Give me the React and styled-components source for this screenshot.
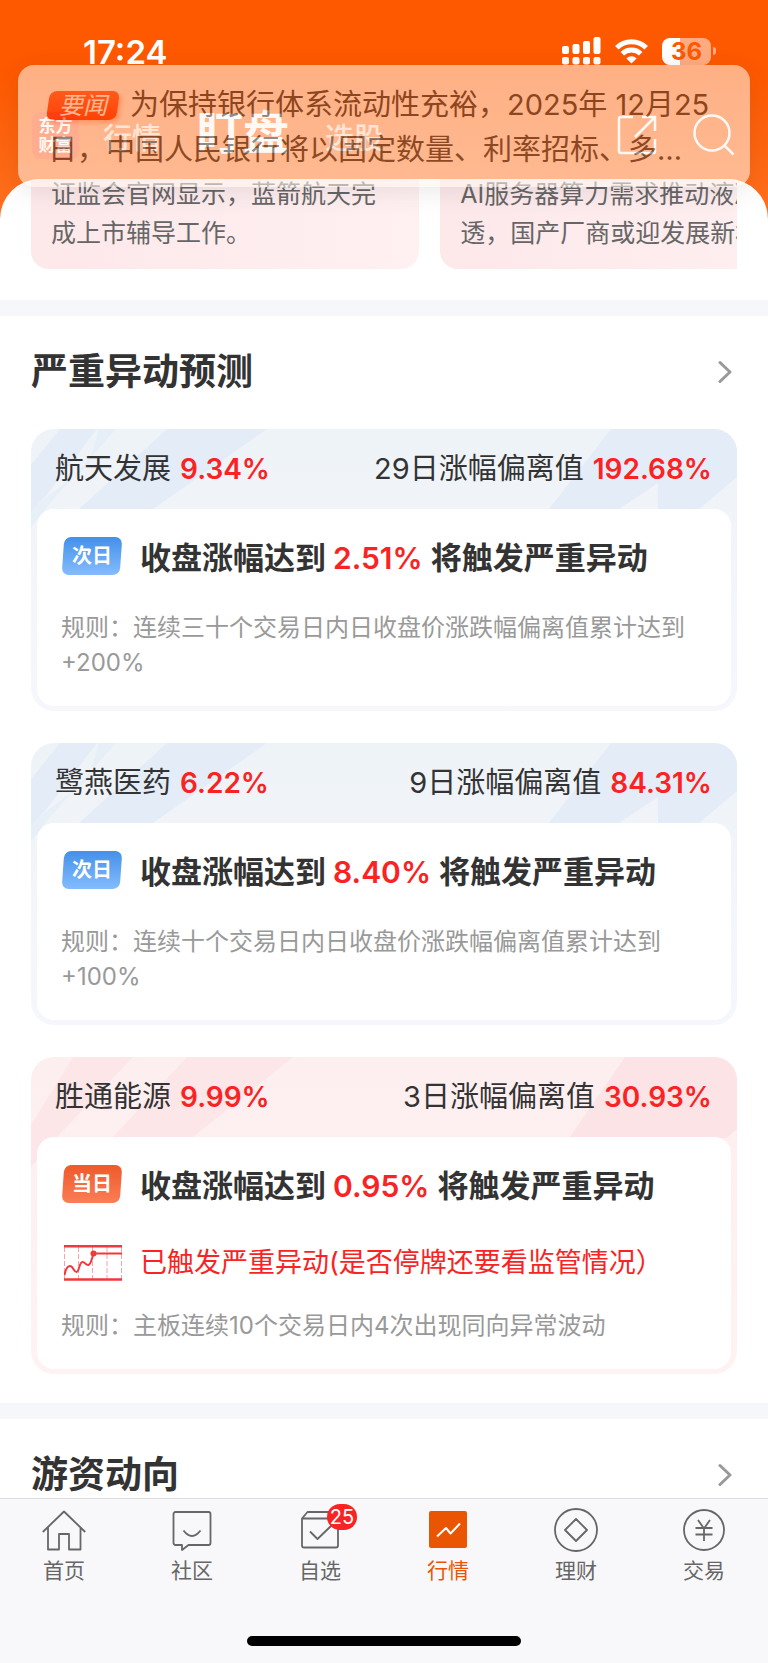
import React from 'react'
import styled, { createGlobalStyle, css } from 'styled-components'

const GlobalStyle = createGlobalStyle`
    *{
        box-sizing: border-box;
    }
    body{
        margin: 0;
        font-family: Inter, "Noto Sans CJK SC", sans-serif;
        color: #333333;
        background: #ffffff;
    }
    h1, h2, p{
        margin: 0;
    }
    a{
        color: inherit;
        text-decoration: none;
    }
    button{
        border: none;
        padding: 0;
        background: none;
        color: inherit;
        font: inherit;
        cursor: pointer;
    }
    svg{
        display: block;
        flex: none;
    }
`

const Screen = styled.div`
    position: relative;
    display: flex;
    flex-direction: column;
    height: 100vh;
    overflow: hidden;
    background: linear-gradient(180deg, #ff5900 0, #ff5900 72px, #ff6e1c 200px, #ff6e1c 100%);
`

const StatusBar = styled.div`
    display: flex;
    align-items: center;
    justify-content: space-between;
    height: 102px;
    flex: none;
    padding: 0 52px 0 83px;
    color: white;
    time{
        padding-top: 2px;
        font-size: 33px;
        font-weight: 600;
        line-height: 40px;
    }
    .icons{
        display: flex;
        align-items: center;
        gap: 14px;
    }
`

const Battery = styled.div`
    display: flex;
    align-items: center;
    gap: 2px;
    .level{
        width: 49px;
        height: 27px;
        border-radius: 8px;
        background: linear-gradient(90deg, #ffffff 0 36%, #ffac80 36%);
        color: #ff5900;
        font-size: 24px;
        font-weight: 700;
        line-height: 27px;
        text-align: center;
    }
    .cap{
        width: 3px;
        height: 8px;
        border-radius: 0 4px 4px 0;
        background: #ffac80;
    }
`

const TopNav = styled.nav`
    display: flex;
    align-items: center;
    flex: none;
    height: 77px;
    padding: 0 33px 11px 32px;
    color: white;
    .tabs{
        display: flex;
        align-items: baseline;
        flex: 1;
        gap: 36px;
        margin-left: 24px;
    }
    .tools{
        display: flex;
        align-items: center;
        gap: 36px;
    }
`

const Logo = styled.a`
    width: 47px;
    height: 47px;
    padding: 5px 0;
    border-radius: 8px;
    background: #ff4f16;
    font-size: 17px;
    font-weight: 700;
    line-height: 19px;
    text-align: center;
`

const TopTab = styled.a`
    font-size: ${({ $active }) => ($active ? 46 : 29)}px;
    font-weight: ${({ $active }) => ($active ? 700 : 500)};
    line-height: 58px;
    opacity: ${({ $active }) => ($active ? 1 : 0.7)};
`

const Toast = styled.aside`
    position: absolute;
    top: 65px;
    left: 18px;
    right: 18px;
    padding: 17px 30px 15px;
    border-radius: 16px;
    background: #fff6ee;
    box-shadow: 0 4px 24px rgba(0, 0, 0, .16);
    opacity: .56;
    p{
        color: #333333;
        font-size: 29px;
        line-height: 45px;
        white-space: nowrap;
    }
`

const slanted = css`
    position: relative;
    isolation: isolate;
    color: white;
    text-align: center;
    &::before{
        content: "";
        position: absolute;
        inset: 0;
        z-index: -1;
        border-radius: 7px;
    }
`

const NewsTag = styled.span`
    ${slanted}
    display: inline-block;
    width: 70px;
    height: 29px;
    margin: 0 12px 4px 0;
    font-size: 24px;
    font-style: italic;
    line-height: 29px;
    vertical-align: middle;
    &::before{
        background: linear-gradient(180deg, #ff5a30, #ff2a00);
        box-shadow: 3px 3px 4px rgba(255, 60, 20, .3);
        transform: skewX(-8deg);
    }
`

const Sheet = styled.main`
    flex: 1;
    min-height: 0;
    overflow: hidden;
    border-radius: 40px 40px 0 0;
    background: white;
`

const NewsStrip = styled.div`
    display: flex;
    align-items: flex-end;
    gap: 21px;
    height: 90px;
    margin: 0 31px 31px;
    overflow: hidden;
`

const NewsCard = styled.a`
    flex: 0 0 55%;
    padding: 0 20px 16px;
    border-radius: 0 0 18px 18px;
    background: linear-gradient(90deg, #fde8ea, #fff0f1);
    color: #666666;
    font-size: 25px;
    line-height: 39px;
`

const Divider = styled.hr`
    height: 16px;
    margin: 0;
    border: none;
    background: #f6f7fa;
`

const SectionHead = styled.header`
    display: flex;
    align-items: center;
    justify-content: space-between;
    height: 113px;
    padding: 0 36px 2px 31px;
    h2{
        font-size: 37px;
        font-weight: 700;
        line-height: 48px;
    }
`

const CardList = styled.div`
    display: flex;
    flex-direction: column;
    gap: 32px;
    padding: 0 31px 29px;
`

const StyledCard = styled.article`
    position: relative;
    overflow: hidden;
    padding: 0 6px 5px;
    border-radius: 23px;
    background: ${({ $tone }) =>
        $tone === 'red'
            ? 'linear-gradient(180deg, #fdeff0, #fff2f2)'
            : 'linear-gradient(180deg, #eef3f8, #f6f7fc)'};
    .head{
        position: relative;
        display: flex;
        align-items: center;
        justify-content: space-between;
        height: 80px;
        padding: 0 19px 0 18px;
        font-size: 29px;
        line-height: 40px;
    }
    .body{
        position: relative;
        padding: 24px 18px 26px 24px;
        border-radius: 17px;
        background: white;
    }
`

const Decor = styled.svg`
    position: absolute;
    top: 0;
    left: 0;
    width: 100%;
    height: 120px;
`

const Rate = styled.strong`
    margin-left: 9px;
    color: #fa2323;
    font-size: 28px;
    font-weight: 600;
`

const TriggerRate = styled(Rate)`
    margin: 0 8px 0 7px;
    font-size: 30px;
`

const Forecast = styled.div`
    display: flex;
    align-items: center;
    gap: 18px;
    height: 50px;
    font-size: 31px;
    font-weight: 700;
    line-height: 50px;
    white-space: nowrap;
`

const DayTag = styled.span`
    ${slanted}
    width: 58px;
    height: 38px;
    margin: 0 1px 4px 2px;
    font-size: 20px;
    font-weight: 700;
    line-height: 38px;
    &::before{
        background: ${({ $tone }) =>
            $tone === 'red'
                ? 'linear-gradient(180deg, #ee5a2b, #fb7d56)'
                : 'linear-gradient(180deg, #4390e8, #84bcfe)'};
        transform: skewX(-4deg);
    }
`

const Alert = styled.div`
    display: flex;
    align-items: center;
    gap: 18px;
    height: 36px;
    margin-top: 34px;
    padding-left: 3px;
    color: #fa2323;
    font-size: 27px;
    line-height: 36px;
    white-space: nowrap;
`

const Rule = styled.p`
    margin-top: 27px;
    color: #999999;
    font-size: 24px;
    line-height: 35px;
`

const TabBar = styled.footer`
    flex: none;
    height: 165px;
    border-top: 1px solid #dddde0;
    background: #f8f8fb;
    nav{
        display: grid;
        grid-template-columns: repeat(6, 1fr);
        height: 137px;
        padding-top: 9px;
    }
`

const Tab = styled.a`
    display: flex;
    flex-direction: column;
    align-items: center;
    color: ${({ $active }) => ($active ? '#ea5504' : '#666666')};
    font-size: 21px;
    line-height: 30px;
    .icon{
        position: relative;
        margin-bottom: 4px;
    }
`

const Badge = styled.span`
    position: absolute;
    top: -4px;
    right: -15px;
    min-width: 30px;
    height: 26px;
    border-radius: 13px;
    background: #fa2323;
    color: white;
    font-size: 20px;
    line-height: 26px;
    text-align: center;
`

const HomeIndicator = styled.div`
    width: 274px;
    height: 10px;
    margin: 0 auto;
    border-radius: 5px;
    background: black;
`

const SignalIcon = () => (
    <svg width="39" height="28" viewBox="0 0 39 28" fill="currentColor">
        <rect x="0" y="9" width="7" height="8" rx="2" />
        <rect x="10.500" y="7" width="7" height="10" rx="2" />
        <rect x="21" y="4" width="7" height="13" rx="2" />
        <rect x="31.500" y="0" width="7" height="17" rx="2" />
        <rect x="0" y="20" width="7" height="7.500" rx="2" />
        <rect x="10.500" y="20" width="7" height="7.500" rx="2" />
        <rect x="21" y="20" width="7" height="7.500" rx="2" />
        <rect x="31.500" y="20" width="7" height="7.500" rx="2" />
    </svg>
)

const WifiIcon = () => (
    <svg width="33" height="25" viewBox="0 0 33 25" fill="none" stroke="currentColor" strokeWidth="5">
        <path d="M1.800 8.800a21 21 0 0 1 29.400 0" />
        <path d="M7.300 14.800a13.200 13.200 0 0 1 18.400 0" />
        <path d="M11.400 19.400a7.400 7.400 0 0 1 10.200 0L16.500 24.500z" fill="currentColor" stroke="none" />
    </svg>
)

const ShareIcon = () => (
    <svg width="40" height="40" viewBox="0 0 40 40" fill="none" stroke="currentColor" strokeWidth="2.500">
        <path d="M16 2H4a2 2 0 0 0-2 2v32a2 2 0 0 0 2 2h32a2 2 0 0 0 2-2V24M25 2h13v14M38 2L18 22" />
    </svg>
)

const SearchIcon = () => (
    <svg width="42" height="42" viewBox="0 0 42 42" fill="none" stroke="currentColor" strokeWidth="2.500">
        <circle cx="19" cy="19" r="17.500" />
        <path d="M31.500 31.500l9 9" />
    </svg>
)

const ChevronIcon = () => (
    <svg width="14" height="24" viewBox="0 0 14 24" fill="none" stroke="#999999" strokeWidth="3" strokeLinecap="round" strokeLinejoin="round">
        <path d="M2 2.500l10 9.500-10 9.500" />
    </svg>
)

const TrendIcon = () => (
    <svg width="58" height="36" viewBox="0 0 58 36" fill="none" stroke="#f0393c">
        <path d="M.500 2v32M14.500 2v32M28.500 2v32M43 2v32M57.500 2v32" stroke="#f6a5a7" strokeDasharray="5 2" />
        <path d="M0 1.200h58M0 34.500h58" strokeWidth="2.400" />
        <path d="M.500 30c1-5 3-9 5.500-9 3.500 0 3.500 6 6.500 6s2.500-10 6-10c3 0 3 3.500 6 3 2.500-.500 3-6 5-11" strokeWidth="2" />
        <path d="M29 8.500h29" strokeWidth="2" />
        <circle cx="29.500" cy="8.500" r="3" fill="#f0393c" stroke="none" />
    </svg>
)

const TabIcon = ({ children }) => (
    <svg width="44" height="44" viewBox="0 0 44 44" fill="none" stroke="currentColor" strokeWidth="1.800" strokeLinejoin="round">
        {children}
    </svg>
)

const tabs = [
    {
        label: '首页',
        icon: <path d="M.800 24L22 3.500 43.200 24M6 19.500v22h11V26h10v15.500h11.500v-22" />,
    },
    {
        label: '社区',
        icon: (
            <>
                <path d="M5.500 4h33a2 2 0 0 1 2 2v29a2 2 0 0 1-2 2h-20l-6.500 5v-5h-6.500a2 2 0 0 1-2-2V6a2 2 0 0 1 2-2z" />
                <path d="M13.500 22.500q8.500 11 17 0" />
            </>
        ),
    },
    {
        label: '自选',
        badge: 25,
        icon: (
            <>
                <path d="M4 10.500v27a2 2 0 0 0 2 2h32a2 2 0 0 0 2-2v-27zM4 10.500L9.500 4h25L40 10.500" />
                <path d="M12 23.500l7.500 7.500L34 17" />
            </>
        ),
    },
    {
        label: '行情',
        active: true,
        icon: (
            <>
                <rect x="3" y="3" width="38" height="37" rx="2" fill="currentColor" stroke="none" />
                <path d="M11 28.500l9-8.500 4.500 5.500L34 15.500" stroke="white" strokeWidth="2" />
            </>
        ),
    },
    {
        label: '理财',
        icon: (
            <>
                <circle cx="22" cy="22" r="21" />
                <path d="M22 11l11 11-11 11-11-11z" />
            </>
        ),
    },
    {
        label: '交易',
        icon: (
            <>
                <circle cx="22" cy="22" r="20" />
                <path d="M16 12l6 8.500 6-8.500M22 20v13M13.500 20h17M13.500 26.500h17" />
            </>
        ),
    },
]

const stocks = [
    {
        tone: 'blue', name: '航天发展', change: '9.34%', days: 29, deviation: '192.68%',
        day: '次日', trigger: '2.51%',
        rule: '规则：连续三十个交易日内日收盘价涨跌幅偏离值累计达到 +200%',
    },
    {
        tone: 'blue', name: '鹭燕医药', change: '6.22%', days: 9, deviation: '84.31%',
        day: '次日', trigger: '8.40%',
        rule: '规则：连续十个交易日内日收盘价涨跌幅偏离值累计达到 +100%',
    },
    {
        tone: 'red', name: '胜通能源', change: '9.99%', days: 3, deviation: '30.93%',
        day: '当日', trigger: '0.95%', alert: '已触发严重异动(是否停牌还要看监管情况）',
        rule: '规则：主板连续10个交易日内4次出现同向异常波动',
    },
]

const BlueDecor = () => (
    <Decor viewBox="0 0 706 120" preserveAspectRatio="none" fill="#e3ecf7">
        <path d="M29 0h37L14 68 0 82V36z" />
        <path d="M68 0h17L19 74 0 98V80L58 36z" opacity=".7" />
        <path d="M136 0h100L122 80H48z" />
        <path d="M580 0h126v48l-38 32h-41V54l-39 26h-70z" />
    </Decor>
)

const RedDecor = () => (
    <Decor viewBox="0 0 706 120" preserveAspectRatio="none" fill="#fce4e6">
        <path d="M42 0h60L26 80 0 110V68z" opacity=".8" />
        <path d="M156 0h106L162 80H82z" opacity=".8" />
        <path d="M594 0h112v72l-10 9H538z" />
    </Decor>
)

function StockCard({ stock }) {
    const { tone, name, change, days, deviation, day, trigger, alert, rule } = stock
    return (
        <StyledCard $tone={tone}>
            {tone === 'red' ? <RedDecor /> : <BlueDecor />}
            <div className="head">
                <span>{name}<Rate>{change}</Rate></span>
                <span>{days}日涨幅偏离值<Rate>{deviation}</Rate></span>
            </div>
            <div className="body">
                <Forecast>
                    <DayTag $tone={tone}>{day}</DayTag>
                    <span>收盘涨幅达到<TriggerRate>{trigger}</TriggerRate>将触发严重异动</span>
                </Forecast>
                {alert && (
                    <Alert>
                        <TrendIcon />
                        <span>{alert}</span>
                    </Alert>
                )}
                <Rule>{rule}</Rule>
            </div>
        </StyledCard>
    )
}

function Section({ title, children }) {
    return (
        <section>
            <SectionHead>
                <h2>{title}</h2>
                <button type="button" aria-label={title}><ChevronIcon /></button>
            </SectionHead>
            {children}
        </section>
    )
}

export default function App() {
    return (
        <Screen>
            <GlobalStyle />
            <StatusBar>
                <time>17:24</time>
                <div className="icons">
                    <SignalIcon />
                    <WifiIcon />
                    <Battery>
                        <div className="level">36</div>
                        <div className="cap" />
                    </Battery>
                </div>
            </StatusBar>
            <TopNav>
                <Logo href="#home">东方<br />财富</Logo>
                <div className="tabs">
                    <TopTab href="#market">行情</TopTab>
                    <TopTab href="#watch" $active>盯盘</TopTab>
                    <TopTab href="#pick">选股</TopTab>
                </div>
                <div className="tools">
                    <button type="button" aria-label="分享"><ShareIcon /></button>
                    <button type="button" aria-label="搜索"><SearchIcon /></button>
                </div>
            </TopNav>
            <Sheet>
                <NewsStrip>
                    <NewsCard href="#news-1">证监会官网显示，蓝箭航天完<br />成上市辅导工作。</NewsCard>
                    <NewsCard href="#news-2">AI服务器算力需求推动液冷渗<br />透，国产厂商或迎发展新机遇</NewsCard>
                </NewsStrip>
                <Divider />
                <Section title="严重异动预测">
                    <CardList>
                        {stocks.map((stock) => <StockCard key={stock.name} stock={stock} />)}
                    </CardList>
                </Section>
                <Divider />
                <Section title="游资动向" />
            </Sheet>
            <TabBar>
                <nav>
                    {tabs.map(({ label, icon, badge, active }) => (
                        <Tab key={label} href={`#${label}`} $active={active}>
                            <span className="icon">
                                <TabIcon>{icon}</TabIcon>
                                {badge && <Badge>{badge}</Badge>}
                            </span>
                            {label}
                        </Tab>
                    ))}
                </nav>
                <HomeIndicator />
            </TabBar>
            <Toast>
                <p>
                    <NewsTag>要闻</NewsTag>为保持银行体系流动性充裕，2025年 12月25
                    <br />
                    日，中国人民银行将以固定数量、利率招标、多…
                </p>
            </Toast>
        </Screen>
    )
}
